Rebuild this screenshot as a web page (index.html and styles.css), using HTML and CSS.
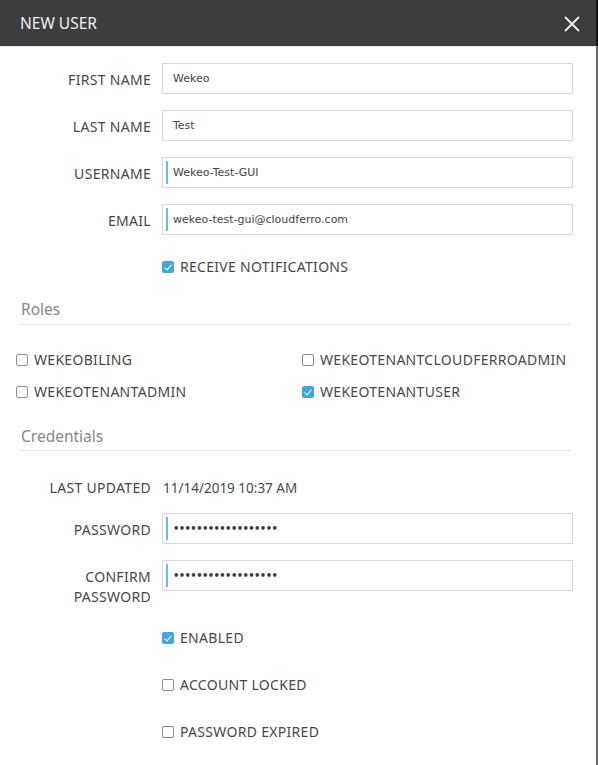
FILE: index.html
```html
<!DOCTYPE html>
<html>
<head>
<meta charset="utf-8">
<link rel="stylesheet" href="styles.css">
</head>
<body>
<div class="dialog">
  <header class="titlebar">
    <span class="title">NEW USER</span>
    <svg class="close" width="16" height="16" viewBox="0 0 16 16"><path d="M1 1L15 15M15 1L1 15" stroke="#f2f2f2" stroke-width="1.8" fill="none"/></svg>
  </header>
  <main class="content">
    <section class="form">
      <label class="lbl">FIRST NAME</label>
      <div class="field"><span class="val">Wekeo</span></div>
      <label class="lbl">LAST NAME</label>
      <div class="field"><span class="val">Test</span></div>
      <label class="lbl">USERNAME</label>
      <div class="field active"><span class="val">Wekeo-Test-GUI</span></div>
      <label class="lbl">EMAIL</label>
      <div class="field active"><span class="val">wekeo-test-gui@cloudferro.com</span></div>
      <div class="check-row"><span class="cb checked"></span><span class="cbtext">RECEIVE NOTIFICATIONS</span></div>
    </section>

    <h2 class="section-title">Roles</h2>
    <section class="roles">
      <div class="role"><span class="cb"></span><span class="cbtext">WEKEOBILING</span></div>
      <div class="role"><span class="cb"></span><span class="cbtext">WEKEOTENANTCLOUDFERROADMIN</span></div>
      <div class="role"><span class="cb"></span><span class="cbtext">WEKEOTENANTADMIN</span></div>
      <div class="role"><span class="cb checked"></span><span class="cbtext">WEKEOTENANTUSER</span></div>
    </section>

    <h2 class="section-title creds">Credentials</h2>
    <section class="form cred-form">
      <label class="lbl plain">LAST UPDATED</label>
      <div class="static">11/14/2019 10:37 AM</div>
      <label class="lbl">PASSWORD</label>
      <div class="field active"><span class="val dots">••••••••••••••••••</span></div>
      <label class="lbl two">CONFIRM<br>PASSWORD</label>
      <div class="field active"><span class="val dots">••••••••••••••••••</span></div>
      <div class="check-row"><span class="cb checked"></span><span class="cbtext">ENABLED</span></div>
      <div class="check-row"><span class="cb"></span><span class="cbtext">ACCOUNT LOCKED</span></div>
      <div class="check-row"><span class="cb"></span><span class="cbtext">PASSWORD EXPIRED</span></div>
    </section>
  </main>
</div>
</body>
</html>
```
FILE: styles.css
```css
html, body {
  margin: 0;
  padding: 0;
  background: #ffffff;
}
body {
  width: 598px;
  height: 765px;
  overflow: hidden;
  font-family: "Noto Sans", "Open Sans", sans-serif;
  color: #444444;
}
.dialog {
  width: 598px;
  height: 765px;
  display: flex;
  flex-direction: column;
}
.titlebar {
  height: 46px;
  background: #3c3d3f;
  border-right: 2px solid #141414;
  border-bottom: 1px solid #e9e9e9;
  display: flex;
  align-items: center;
  justify-content: space-between;
  padding: 0 16px 0 20px;
}
.title {
  color: #f0f0f0;
  font-size: 15.5px;
}
.close {
  display: block;
  margin-top: 1px;
}
.content {
  flex: 1;
  border-right: 2px solid #666666;
  padding-top: 16px;
}
.form {
  display: grid;
  grid-template-columns: 151px 411px;
  column-gap: 11px;
  row-gap: 16px;
}
.lbl {
  text-align: right;
  font-size: 14px;
  letter-spacing: 0.3px;
  line-height: 20px;
  padding-top: 7px;
  color: #484848;
}
.lbl.two {
  margin-bottom: -1px;
}
.lbl.plain {
  padding-top: 0;
  align-self: center;
}
.field {
  height: 31px;
  box-sizing: border-box;
  border: 1px solid #d9d9d9;
  display: flex;
  align-items: center;
  padding-left: 10px;
  position: relative;
}
.field.active::before {
  content: "";
  position: absolute;
  left: 3px;
  top: 3px;
  bottom: 3px;
  width: 2px;
  background: #6cbde0;
}
.val {
  font-family: "DejaVu Sans", sans-serif;
  font-size: 11px;
  color: #444;
}
.val.dots {
  font-size: 10px;
  font-weight: bold;
  letter-spacing: -0.6px;
  color: #3a3a3a;
}
.static {
  height: 31px;
  display: flex;
  align-items: center;
  font-size: 13.5px;
  margin-left: 1px;
  color: #484848;
}
.check-row {
  grid-column: 2;
  height: 31px;
  display: flex;
  align-items: center;
}
.cb {
  width: 12px;
  height: 12px;
  box-sizing: border-box;
  border: 1px solid #8c8c8c;
  border-radius: 2px;
  background: #fff;
  flex: none;
  position: relative;
}
.cb.checked {
  border-color: #3fa7dc;
  background: #3fa7dc;
}
.cb.checked::after {
  content: "";
  position: absolute;
  left: 3px;
  top: 1px;
  width: 3px;
  height: 6px;
  border: solid #fff;
  border-width: 0 1.5px 1.5px 0;
  transform: rotate(40deg);
}
.cbtext {
  font-size: 14px;
  letter-spacing: 0.3px;
  line-height: 20px;
  margin-left: 6px;
  color: #484848;
}
.section-title {
  margin: 17px 25px 0 20px;
  padding: 0 0 5px 1px;
  font-weight: normal;
  font-size: 15.5px;
  line-height: 20px;
  color: #888888;
  border-bottom: 1px solid #e6e6e6;
}
.section-title.creds {
  margin-top: 24px;
  padding-bottom: 4px;
}
.roles {
  display: grid;
  grid-template-columns: 286px 286px;
  row-gap: 12px;
  padding-left: 16px;
  margin-top: 25px;
}
.role {
  display: flex;
  align-items: center;
  height: 20px;
}
.cred-form {
  margin-top: 21px;
  row-gap: 16px;
}
.cred-form .static,
.cred-form .lbl.plain {
  margin-bottom: -6px;
}
```
